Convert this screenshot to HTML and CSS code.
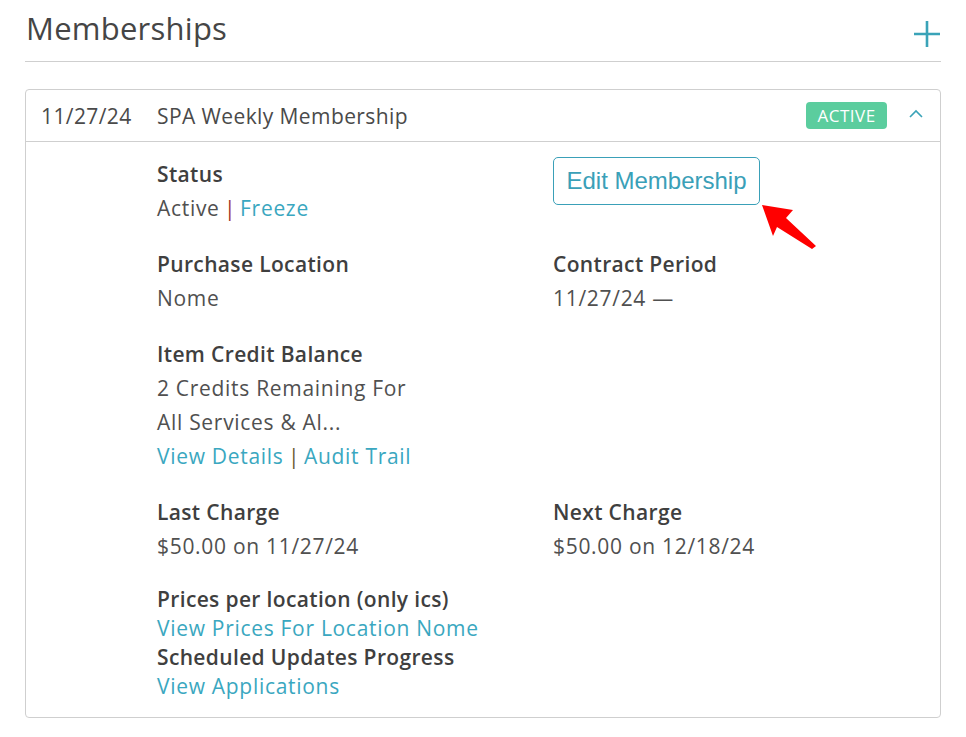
FILE: index.html
```html
<!DOCTYPE html>
<html>
<head>
<meta charset="utf-8">
<link rel="stylesheet" href="styles.css">
</head>
<body>
<div class="page">
  <div class="title-row">
    <h1 class="title">Memberships</h1>
    <svg class="plus" width="26" height="26" viewBox="0 0 26 26"><path d="M13 0V26M0 13H26" stroke="#3aa3b8" stroke-width="2.6"/></svg>
  </div>
  <div class="card">
    <div class="card-head">
      <span class="date">11/27/24</span>
      <span class="name">SPA Weekly Membership</span>
      <span class="badge">ACTIVE</span>
      <svg class="chev" width="14" height="9" viewBox="0 0 14 9"><path d="M1 8L7 2L13 8" fill="none" stroke="#3aa3b8" stroke-width="1.6"/></svg>
    </div>
    <div class="card-body">
      <div class="group">
        <div class="label">Status</div>
        <div class="value">Active<span class="pipe red"> | </span><a class="link">Freeze</a></div>
      </div>
      <div class="group">
        <button class="edit-btn">Edit Membership</button>
      </div>
      <div class="group">
        <div class="label">Purchase Location</div>
        <div class="value">Nome</div>
      </div>
      <div class="group">
        <div class="label">Contract Period</div>
        <div class="value">11/27/24 —</div>
      </div>
      <div class="group">
        <div class="label">Item Credit Balance</div>
        <div class="value">2 Credits Remaining For</div>
        <div class="value">All Services &amp; Al...</div>
        <div class="value"><a class="link">View Details</a><span class="pipe dark"> | </span><a class="link">Audit Trail</a></div>
      </div>
      <div class="group"></div>
      <div class="group">
        <div class="label">Last Charge</div>
        <div class="value">$50.00 on 11/27/24</div>
      </div>
      <div class="group">
        <div class="label">Next Charge</div>
        <div class="value">$50.00 on 12/18/24</div>
      </div>
      <div class="group tight">
        <div class="label">Prices per location (only ics)</div>
        <div class="value"><a class="link">View Prices For Location Nome</a></div>
        <div class="label">Scheduled Updates Progress</div>
        <div class="value"><a class="link">View Applications</a></div>
      </div>
    </div>
  </div>
</div>
<svg class="arrow" width="60" height="50" viewBox="0 0 60 50"><polygon points="1,0 32,5 25,13 55,41 51,44 16,22 12,31" fill="#ff0000"/></svg>
</body>
</html>
```
FILE: styles.css
```css
* { box-sizing: border-box; }
html, body { margin: 0; padding: 0; background: #fff; }
body {
  font-family: "Open Sans", Lato, "Liberation Sans", sans-serif;
  color: #4a4a4a;
  position: relative;
}
.page {
  padding: 0 25px;
}
.title-row {
  height: 62px;
  border-bottom: 1px solid #cfcfcf;
  display: flex;
  justify-content: space-between;
  align-items: flex-start;
}
.title {
  margin: 8px 0 0 1px;
  font-size: 31px;
  letter-spacing: 0.25px;
  font-weight: 400;
  color: #454545;
  line-height: 40px;
}
.plus { margin-top: 21px; margin-right: 1px; }
.card {
  margin-top: 27px;
  border: 1px solid #cfcfcf;
  border-radius: 4px;
}
.card-head {
  height: 52px;
  border-bottom: 1px solid #cfcfcf;
  display: flex;
  align-items: center;
  padding: 0 17px 0 15px;
  font-size: 21px;
  letter-spacing: 0.4px;
  color: #4a4a4a;
}
.date { width: 116px; }
.name { flex: 1; }
.badge {
  background: #5bcd9e;
  color: #fff;
  font-size: 17px;
  letter-spacing: 0.5px;
  border-radius: 4px;
  height: 27px;
  line-height: 27px;
  width: 81px;
  text-align: center;
  margin-right: 22px;
}
.chev { margin-top: -4px; }
.card-body {
  display: grid;
  grid-template-columns: 396px 1fr;
  padding: 15px 0 16px 131px;
  row-gap: 22px;
}
.group { font-size: 21px; line-height: 34px; }
.label { font-weight: 600; color: #3f3f3f; letter-spacing: 0.35px; }
.value { color: #505050; letter-spacing: 0.7px; }
.tight { line-height: 29px; }
.link { color: #3aa7c0; text-decoration: none; }
.pipe { letter-spacing: 0; word-spacing: -1px; white-space: pre; }
.pipe.red { color: #a0372a; }
.pipe.dark { color: #6a5a30; }
.edit-btn {
  font-family: "Liberation Sans", Arial, sans-serif;
  font-size: 24px;
  color: #3aa0b8;
  background: #fff;
  border: 1px solid #3aa0b8;
  border-radius: 5px;
  height: 48px;
  padding: 0 12px;
  width: 207px;
}
.arrow {
  position: absolute;
  left: 761px;
  top: 205px;
}
```
